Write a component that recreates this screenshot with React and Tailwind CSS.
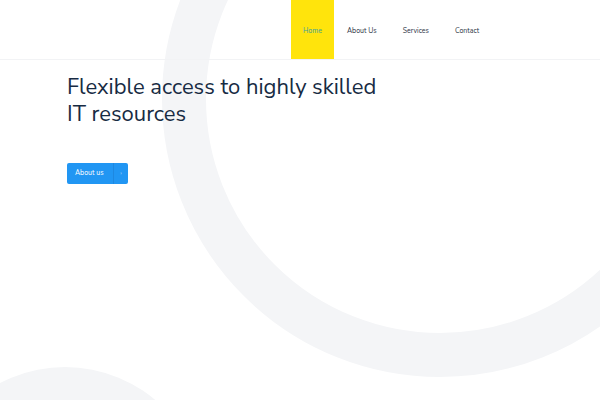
import React from 'react';

const navItems = ['Home', 'About Us', 'Services', 'Contact'];

const App = () => {
  return (
    <div className="relative w-[600px] h-[400px] overflow-hidden bg-white" style={{ fontFamily: "'Nunito Sans', Lato, 'Open Sans', sans-serif" }}>
      {/* background decorations */}
      <div className="absolute left-[162px] top-[-179px] w-[556px] h-[556px] rounded-full border-[44px] border-[#f4f5f7]" />
      <div className="absolute left-[-75px] top-[367px] w-[280px] h-[280px] rounded-full bg-[#f4f5f7]" />

      <div className="relative">
        {/* Header */}
        <header className="h-[60px] flex border-b border-[#f2f3f5]">
          <nav className="ml-[291px] flex h-full">
            {navItems.map((item, i) => (
              <a
                key={item}
                className={
                  i === 0
                    ? 'h-full w-[43px] pt-[3px] bg-[#ffe40c] flex items-center justify-center text-[7px] text-[#3aa0a0]'
                    : 'h-full pt-[3px] flex items-center px-[13px] text-[7px] text-[#2b3343]'
                }
              >
                {item}
              </a>
            ))}
          </nav>
        </header>

        {/* Hero */}
        <main className="pl-[67px] pt-[14px]">
          <h1 className="text-[22px] leading-[27px] text-[#172b43] font-normal">
            Flexible access to highly skilled
            <br />
            IT resources
          </h1>
          <button className="mt-[35px] w-[61px] h-[21px] rounded-[2px] bg-[#2196f3] flex items-center text-white text-[7px]">
            <span className="pl-[8px] flex-1 text-left">About us</span>
            <span className="h-full w-[15px] border-l border-[#1e88e0] flex items-center justify-center text-[6px] text-[#b9dcfb]">›</span>
          </button>
        </main>
      </div>
    </div>
  );
};

export default App;
